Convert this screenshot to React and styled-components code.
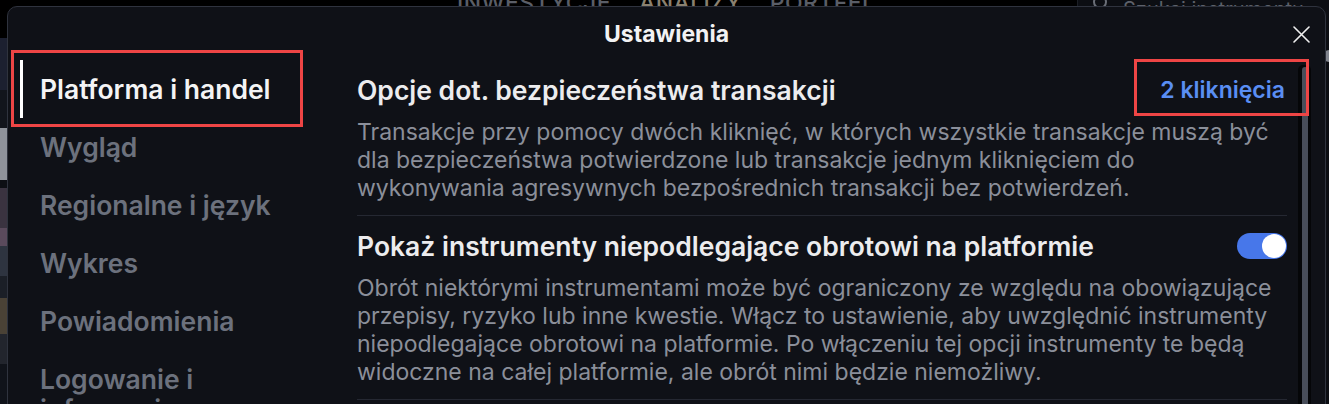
import React from "react";
import styled, { createGlobalStyle } from "styled-components";

const Global = createGlobalStyle`
  html, body { margin: 0; padding: 0; background: #000; }
  body {
    font-family: Inter, "Noto Sans", "Liberation Sans", sans-serif;
    overflow: hidden;
    -webkit-font-smoothing: antialiased;
  }
  * { box-sizing: border-box; }
`;

const Screen = styled.div`
  position: relative;
  width: 1329px;
  height: 404px;
  overflow: hidden;
  background: #000;
`;

/* ---------- app behind the dialog ---------- */
const Backdrop = styled.div`
  display: flex;
  flex-direction: column;
  height: 100%;
`;

const TopBar = styled.header`
  display: flex;
  align-items: flex-start;
  height: 48px;
  background: #000;
  overflow: hidden;
`;

const NavGroup = styled.nav`
  display: flex;
  gap: 28px;
  margin-left: 457px;
  margin-top: -9px;
`;

const NavItem = styled.span`
  font-size: 23px;
  line-height: 24px;
  font-weight: 500;
  letter-spacing: 0.4px;
  color: ${(p) => (p.$active ? "#8a8170" : "#5a5e67")};
`;

const SearchBox = styled.div`
  margin-left: auto;
  width: 252px;
  height: 100%;
  background: #0c0e13;
  border-left: 1px solid #1b1e25;
  display: flex;
  align-items: flex-start;
  gap: 14px;
  padding: 0 0 0 15px;
`;

const SearchText = styled.span`
  font-size: 20px;
  line-height: 22px;
  color: #5d616a;
  margin-top: -2px;
`;

const SearchIcon = styled.svg`
  margin-top: -5px;
  flex-shrink: 0;
`;

const MainRow = styled.div`
  flex: 1;
  display: flex;
`;

const LeftStrip = styled.div`
  width: 7px;
  display: flex;
  flex-direction: column;
`;

const StripBlock = styled.div`
  height: ${(p) => p.$h}px;
  background: ${(p) => p.$bg};
`;

const MainFill = styled.div`
  flex: 1;
  background: #07080b;
`;

const RightStrip = styled.div`
  width: 4px;
  background: #0b0d12;
  display: flex;
  flex-direction: column;
  align-items: flex-end;
`;

const GreyDot = styled.span`
  margin-top: 12px;
  width: 6px;
  height: 12px;
  border-radius: 6px 0 0 6px;
  background: #80848d;
`;

/* ---------- dialog ---------- */
const Dialog = styled.section`
  position: absolute;
  top: 6px;
  left: 7px;
  width: 1319px;
  height: 440px;
  background: #0f1117;
  border: 1px solid #2f333e;
  border-radius: 10px;
  display: flex;
  flex-direction: column;
  overflow: hidden;
`;

const Header = styled.div`
  display: grid;
  grid-template-columns: 1fr auto 1fr;
  align-items: center;
  height: 53px;
  flex-shrink: 0;
`;

const Title = styled.h2`
  grid-column: 2;
  margin: 0;
  font-size: 23px;
  line-height: 26px;
  font-weight: 700;
  color: #f2f2f3;
`;

const CloseButton = styled.button`
  grid-column: 3;
  justify-self: end;
  margin-right: 15px;
  margin-top: 1px;
  width: 18px;
  height: 18px;
  padding: 0;
  border: 0;
  background: none;
  display: flex;
  align-items: center;
  justify-content: center;
  cursor: pointer;
`;

const Body = styled.div`
  flex: 1;
  display: flex;
  min-height: 0;
`;

const Sidebar = styled.nav`
  width: 310px;
  flex-shrink: 0;
  padding-left: 12px;
  display: flex;
  flex-direction: column;
`;

const SideItem = styled.div`
  position: relative;
  width: 274px;
  padding: 14px 0 14px 17px;
  border-left: 3px solid ${(p) => (p.$active ? "#ffffff" : "transparent")};
  font-size: 26.5px;
  line-height: 30px;
  font-weight: 600;
  color: ${(p) => (p.$active ? "#f4f4f5" : "#6c717d")};
`;

const Highlight = styled.span`
  position: absolute;
  z-index: 2;
  top: ${(p) => p.$t}px;
  right: ${(p) => p.$r}px;
  bottom: ${(p) => p.$b}px;
  left: ${(p) => p.$l}px;
  border: 3px solid #ee4545;
  pointer-events: none;
`;

const Content = styled.div`
  flex: 1;
  min-width: 0;
  display: flex;
`;

const Scroll = styled.div`
  flex: 1;
  min-width: 0;
  padding: 0 11px 0 39px;
`;

const Setting = styled.div`
  padding: 14px 0 13px;
  border-bottom: 1px solid #252832;
`;

const RowHead = styled.div`
  display: flex;
  align-items: center;
  justify-content: space-between;
  gap: 24px;
`;

const SettingTitle = styled.h3`
  margin: 0;
  font-size: 26.5px;
  line-height: 32px;
  font-weight: 600;
  color: #ececee;
`;

const Desc = styled.p`
  margin: 12px 0 0;
  font-size: 23px;
  line-height: 28px;
  font-weight: 400;
  color: #8b8f9a;
  white-space: nowrap;
`;

const ValueLink = styled.span`
  position: relative;
  margin-right: 2px;
  font-size: 23px;
  line-height: 32px;
  font-weight: 600;
  color: #5a8ef3;
  white-space: nowrap;
`;

const Toggle = styled.span`
  width: 50px;
  height: 26px;
  border-radius: 13px;
  background: ${(p) => (p.$on ? "#4777ea" : "#3a3e49")};
  display: flex;
  align-items: center;
  justify-content: ${(p) => (p.$on ? "flex-end" : "flex-start")};
  padding: 0 1px;
  flex-shrink: 0;
`;

const Knob = styled.span`
  width: 24px;
  height: 24px;
  border-radius: 50%;
  background: #ffffff;
`;

const ScrollTrack = styled.div`
  width: 13px;
  margin: 5px 14px 0 0;
  background: #050608;
  border-radius: 5px 5px 0 0;
  display: flex;
  flex-direction: column;
  padding: 2px 0 0 4px;
`;

const ScrollThumb = styled.div`
  flex: 1;
  width: 6px;
  border-radius: 3px 3px 0 0;
  background: #484d59;
`;

const sideItems = [
  "Platforma i handel",
  "Wygląd",
  "Regionalne i język",
  "Wykres",
  "Powiadomienia",
  "Logowanie i informacje",
];

export default function App() {
  return (
    <>
      <Global />
      <Screen>
        <Backdrop>
          <TopBar>
            <NavGroup>
              <NavItem>INWESTYCJE</NavItem>
              <NavItem $active>ANALIZY</NavItem>
              <NavItem>PORTFEL</NavItem>
            </NavGroup>
            <SearchBox>
              <SearchIcon width="16" height="16" viewBox="0 0 16 16" fill="none">
                <circle cx="7" cy="7" r="6" stroke="#6a6e77" strokeWidth="2" />
              </SearchIcon>
              <SearchText>Szukaj instrumentu</SearchText>
            </SearchBox>
          </TopBar>
          <MainRow>
            <LeftStrip>
              <StripBlock $h={52} $bg="#1c2030" />
              <StripBlock $h={38} $bg="#12151c" />
              <StripBlock $h={52} $bg="#8f939b" />
              <StripBlock $h={8} $bg="#0d0f14" />
              <StripBlock $h={40} $bg="#3a3340" />
              <StripBlock $h={18} $bg="#5a4a5c" />
              <StripBlock $h={30} $bg="#2e3440" />
              <StripBlock $h={22} $bg="#1b1f27" />
              <StripBlock $h={36} $bg="#4a4236" />
              <StripBlock $h={30} $bg="#22252d" />
              <StripBlock $h={40} $bg="#10131a" />
            </LeftStrip>
            <MainFill />
            <RightStrip>
              <GreyDot />
            </RightStrip>
          </MainRow>
        </Backdrop>

        <Dialog>
          <Header>
            <Title>Ustawienia</Title>
            <CloseButton aria-label="Zamknij">
              <svg width="17" height="17" viewBox="0 0 17 17" fill="none">
                <path
                  d="M1 1L16 16M16 1L1 16"
                  stroke="#f0f0f0"
                  strokeWidth="1.6"
                  strokeLinecap="round"
                />
              </svg>
            </CloseButton>
          </Header>
          <Body>
            <Sidebar>
              {sideItems.map((label, i) => (
                <SideItem key={label} $active={i === 0}>
                  {label}
                  {i === 0 && <Highlight $t={-10} $r={-9} $b={-9} $l={-12} />}
                </SideItem>
              ))}
            </Sidebar>
            <Content>
              <Scroll>
                <Setting>
                  <RowHead>
                    <SettingTitle>Opcje dot. bezpieczeństwa transakcji</SettingTitle>
                    <ValueLink>
                      2 kliknięcia
                      <Highlight $t={-15} $r={-24} $b={-10} $l={-26} />
                    </ValueLink>
                  </RowHead>
                  <Desc>
                    Transakcje przy pomocy dwóch kliknięć, w których wszystkie transakcje muszą być
                    <br />
                    dla bezpieczeństwa potwierdzone lub transakcje jednym kliknięciem do
                    <br />
                    wykonywania agresywnych bezpośrednich transakcji bez potwierdzeń.
                  </Desc>
                </Setting>
                <Setting>
                  <RowHead>
                    <SettingTitle>
                      Pokaż instrumenty niepodlegające obrotowi na platformie
                    </SettingTitle>
                    <Toggle $on role="switch" aria-checked="true">
                      <Knob />
                    </Toggle>
                  </RowHead>
                  <Desc>
                    Obrót niektórymi instrumentami może być ograniczony ze względu na obowiązujące
                    <br />
                    przepisy, ryzyko lub inne kwestie. Włącz to ustawienie, aby uwzględnić instrumenty
                    <br />
                    niepodlegające obrotowi na platformie. Po włączeniu tej opcji instrumenty te będą
                    <br />
                    widoczne na całej platformie, ale obrót nimi będzie niemożliwy.
                  </Desc>
                </Setting>
              </Scroll>
              <ScrollTrack>
                <ScrollThumb />
              </ScrollTrack>
            </Content>
          </Body>
        </Dialog>
      </Screen>
    </>
  );
}
